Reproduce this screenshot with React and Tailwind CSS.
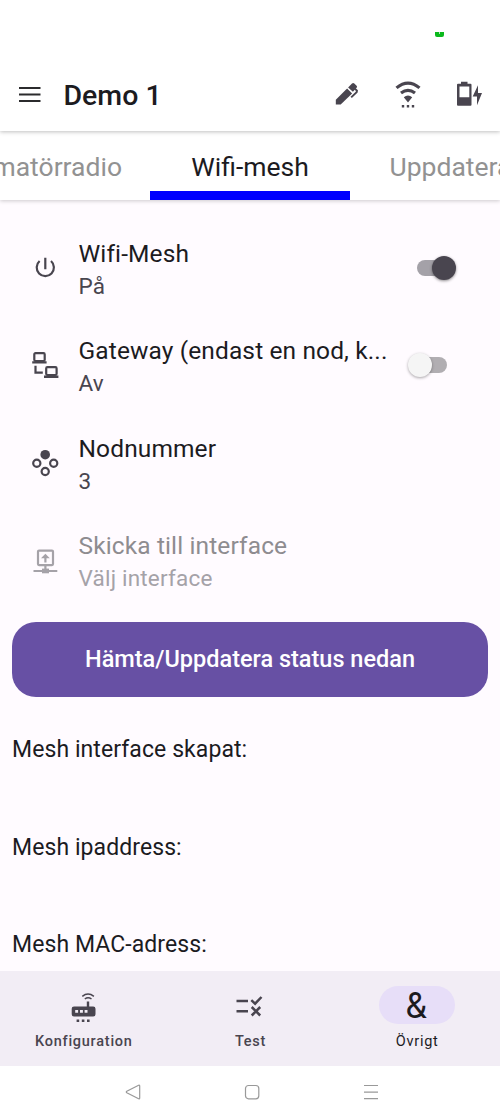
import React from "react";

function MenuIcon() {
  return (
    <svg className="h-7 w-7 shrink-0" viewBox="0 0 28 28" fill="none" stroke="#2b2b2d" strokeWidth="2">
      <path d="M3 7h21.5M3 13.500h21.5M3 20h21.5" />
    </svg>
  );
}

function MarkerIcon() {
  return (
    <svg className="h-7 w-7" viewBox="0 0 28 28" fill="#49454f">
      <path d="M1.800 18.700 13.100 7.400l5 5L6.700 23.600H1.800z" />
      <path d="m14.100 6.500 3.900-4q1.200-1 2.300 0l2.300 2.300q1 1 0 2l-3.700 4z" />
      <path d="m20.800 7.600 2.100 2-.2 1.500-5.500 5.300" fill="none" stroke="#49454f" strokeWidth="2" />
    </svg>
  );
}

function WifiIcon() {
  return (
    <svg className="h-8 w-7" viewBox="0 0 28 32" fill="none" stroke="#49454f" strokeWidth="3.200">
      <path d="M1.500 8.900Q13 -.800 24.500 8.900" />
      <path d="M6 14q7-5.400 14 0" />
      <path d="M8.800 18.200q4.200-3.200 8.400 0L13 23.500z" fill="#49454f" stroke="none" />
      <path d="M6.800 27.200h2.400M11.800 27.200h2.400M16.800 27.200h2.400" strokeWidth="2.400" />
    </svg>
  );
}

function BatteryIcon() {
  return (
    <svg className="h-7 w-7" viewBox="0 0 28 28" fill="#49454f">
      <path
        fillRule="evenodd"
        d="M5 .700h6.500v2h3q1 0 1 1v20q0 1-1 1H2q-1 0-1-1v-20q0-1 1-1h3zM3.500 5.400v10.800h9.800V5.400z"
      />
      <path d="M22 4.200V12h4l-5 12.200v-8.700h-4.300z" />
    </svg>
  );
}

function PowerIcon() {
  return (
    <svg className="h-7 w-7" viewBox="0 0 28 28" fill="none" stroke="#49454f" strokeWidth="2.200">
      <path d="M14.300 3.700v11.500M8.600 7a8.600 8.600 0 1 0 11.400 0" />
    </svg>
  );
}

function GatewayIcon() {
  return (
    <svg className="h-7 w-7" viewBox="0 0 28 28" fill="none" stroke="#49454f" strokeWidth="2.200">
      <rect x="3.300" y="2.200" width="10.400" height="7.800" rx="1.200" />
      <rect x="15.200" y="16.200" width="10.400" height="7.800" rx="1.200" />
      <path d="M1.200 11.400h14.400M13 25.700h14.400" strokeWidth="2.400" />
      <path d="M4.500 14.700v7h7.300" />
    </svg>
  );
}

function NodesIcon() {
  return (
    <svg className="h-7 w-7" viewBox="0 0 28 28" fill="none" stroke="#49454f" strokeWidth="2.200">
      <circle cx="14.200" cy="5.700" r="4.800" fill="#49454f" stroke="none" />
      <circle cx="5.800" cy="14.200" r="3.600" />
      <circle cx="22.700" cy="14.200" r="3.600" />
      <circle cx="14.200" cy="22.500" r="3.600" />
    </svg>
  );
}

function InterfaceIcon() {
  return (
    <svg className="h-7 w-7" viewBox="0 0 28 28" fill="none" stroke="#a5a2a8" strokeWidth="2.200">
      <rect x="7" y="4.600" width="15" height="14.500" rx="1" />
      <path d="M14.400 19v5M2.500 25h23.800" />
      <path d="M11 22.600h7v4.700h-7z" fill="#a5a2a8" stroke="none" />
      <path d="M14.400 16.500v-7" />
      <path d="m10 12.300 4.400-4.500 4.400 4.500z" fill="#a5a2a8" stroke="none" />
    </svg>
  );
}

function RouterIcon() {
  return (
    <svg className="h-8 w-8" viewBox="0 0 32 32" fill="#49454f">
      <path
        fillRule="evenodd"
        d="M19.800 10.500h2.400v5h4q2.300 0 2.300 2.300v5.400q0 2.300-2.300 2.300H7q-2.300 0-2.300-2.300v-5.400Q4.700 15.500 7 15.500h12.800zM8.200 19v2.800h2.900V19zm4.800 0v2.800h2.900V19zm4.600 0v2.800h2.900V19z"
      />
      <path d="M15.300 5.300q5.700-4.500 11.600 0M17.800 8q3.300-2.500 6.700 0" fill="none" stroke="#49454f" strokeWidth="1.500" />
      <path d="M9.600 28.500h2.600v2.400H9.600zM14.800 28.500h2.600v2.400h-2.600zM20 28.500h2.600v2.400H20z" />
    </svg>
  );
}

function RuleIcon() {
  return (
    <svg className="h-8 w-8" viewBox="0 0 32 32" fill="none" stroke="#49454f" strokeWidth="2.500">
      <path d="M2.500 12H14M2.500 22.300H14" />
      <path d="m17.300 11.200 3.800 3.500L27.500 8M17.700 18l8.500 8.500M26.200 18l-8.500 8.500" />
    </svg>
  );
}

function Toggle({ on }) {
  return (
    <div
      className={
        on
          ? "relative mr-[53px] h-4 w-[30px] rounded-full bg-[#a4a1a8]"
          : "relative mr-[53px] mb-px h-4 w-[30px] rounded-full bg-[#b1aeb2]"
      }
    >
      <span
        className={
          on
            ? "absolute -top-1 left-[15px] h-6 w-6 rounded-full bg-[#49454f] shadow-[0_1px_3px_rgba(0,0,0,0.45)]"
            : "absolute -top-1 -left-[9px] h-6 w-6 rounded-full bg-[#f5f5f5] shadow-[0_1px_3px_rgba(0,0,0,0.35)]"
        }
      />
    </div>
  );
}

function SettingRow({ icon, title, value, disabled, children }) {
  return (
    <div className="flex h-[97.5px] items-center">
      <div className="ml-[31px] w-[47.500px] shrink-0">{icon}</div>
      <div className="flex-1 pt-[4px]">
        <p
          className={
            disabled
              ? "whitespace-nowrap text-[24.500px] leading-8 tracking-[0.12px] text-[#8e8c90]"
              : "whitespace-nowrap text-[24.500px] leading-8 tracking-[0.12px] text-[#1c1b1f]"
          }
        >
          {title}
        </p>
        <p
          className={
            disabled
              ? "text-[22.500px] leading-8 tracking-[0.2px] text-[#a5a2a8]"
              : "text-[22.500px] leading-8 tracking-[0.2px] text-[#49454f]"
          }
        >
          {value}
        </p>
      </div>
      {children}
    </div>
  );
}

const statusLabels = ["Mesh interface skapat:", "Mesh ipaddress:", "Mesh MAC-adress:"];

export default function App() {
  return (
    <div className="flex h-[1118px] w-[500px] flex-col overflow-hidden bg-[#fffbff] font-['Roboto',sans-serif] text-[#1c1b1f]">
      <header className="relative z-20 h-[131px] shrink-0 bg-white shadow-[0_1px_4px_rgba(0,0,0,0.25)]">
        <div className="flex h-[58px] justify-end pt-8 pr-14">
          <span className="flex h-[4.500px] w-[9px] justify-center rounded-b-[2px] bg-[#0ab91c]">
            <span className="h-[2px] w-px bg-white/70" />
          </span>
        </div>
        <div className="flex h-[73px] items-center pl-[15.500px]">
          <MenuIcon />
          <h1 className="ml-5 flex-1 pt-[3px] text-[28.500px] font-medium">Demo 1</h1>
          <div className="flex items-center gap-[33px] pr-[16px]">
            <MarkerIcon />
            <WifiIcon />
            <BatteryIcon />
          </div>
        </div>
      </header>

      <nav className="relative z-10 flex h-[69px] shrink-0 justify-center bg-white text-[26.500px] shadow-[0_1px_4px_rgba(0,0,0,0.2)]">
        <div className="flex w-[150px] shrink-0 justify-end pt-[16px] pr-[28px] leading-10 whitespace-nowrap text-[#929292]">
          Amatörradio
        </div>
        <div className="flex w-[200px] shrink-0 flex-col text-center">
          <span className="flex-1 pt-[16px] leading-10">Wifi-mesh</span>
          <span className="h-[9px] bg-[#0000ff]" />
        </div>
        <div className="w-[150px] shrink-0 overflow-hidden pt-[16px] pl-[39.500px] leading-10 whitespace-nowrap text-[#929292]">
          Uppdatera
        </div>
      </nav>

      <main className="min-h-0 flex-1 overflow-hidden pt-[19px]">
        <SettingRow icon={<PowerIcon />} title="Wifi-Mesh" value="På">
          <Toggle on />
        </SettingRow>
        <SettingRow icon={<GatewayIcon />} title="Gateway (endast en nod, k..." value="Av">
          <Toggle />
        </SettingRow>
        <SettingRow icon={<NodesIcon />} title="Nodnummer" value="3" />
        <SettingRow icon={<InterfaceIcon />} title="Skicka till interface" value="Välj interface" disabled />

        <button className="mx-3 mt-[12.500px] block h-[75.500px] w-[476px] rounded-[24px] bg-[#6750a4] text-[23.500px] font-medium text-white">
          Hämta/Uppdatera status nedan
        </button>

        <div className="px-3 pt-[4px]">
          {statusLabels.map((label) => (
            <p key={label} className="h-[97.5px] text-[23px] leading-[97.5px] tracking-[0.08px]">
              {label}
            </p>
          ))}
        </div>
      </main>

      <footer className="relative z-10 shrink-0">
        <div className="grid h-[95px] grid-cols-3 bg-[#f2edf5] pt-[15px] text-center text-[14.500px] font-medium tracking-[0.75px] text-[#49454f]">
          <div className="flex flex-col items-center">
            <span className="flex h-[37.500px] items-center pt-[5px]">
              <RouterIcon />
            </span>
            <span className="mt-[7.500px] pl-px">Konfiguration</span>
          </div>
          <div className="flex flex-col items-center">
            <span className="flex h-[37.500px] items-center">
              <RuleIcon />
            </span>
            <span className="mt-[7.500px] pl-px">Test</span>
          </div>
          <div className="flex flex-col items-center text-[#1c1b1f]">
            <span className="flex h-[37.500px] w-[76px] items-center justify-center rounded-full bg-[#e7def8] pt-[3px] text-[36px] leading-none font-normal tracking-normal">
              <span className="scale-x-[0.95]">&amp;</span>
            </span>
            <span className="mt-[7.500px] pl-px font-normal">Övrigt</span>
          </div>
        </div>
        <div className="flex h-[52px] items-center bg-white pl-[125px]">
          <svg className="h-4 w-4" viewBox="0 0 16 16" fill="none" stroke="#999" strokeWidth="1.200">
            <path d="M13.600 1.200Q14.700.800 14.700 2v12q0 1.200-1.100.800L1.800 8.700Q.800 8 1.800 7.300z" />
          </svg>
          <svg className="ml-[103px] h-4 w-4" viewBox="0 0 16 16" fill="none" stroke="#999" strokeWidth="1.200">
            <rect x="1.500" y="1.500" width="13.300" height="13.300" rx="3" />
          </svg>
          <svg className="ml-[103px] h-4 w-4" viewBox="0 0 16 16" fill="none" stroke="#999" strokeWidth="1.200">
            <path d="M1 1.500h14M1 8.200h14M1 14.700h14" />
          </svg>
        </div>
      </footer>
    </div>
  );
}
